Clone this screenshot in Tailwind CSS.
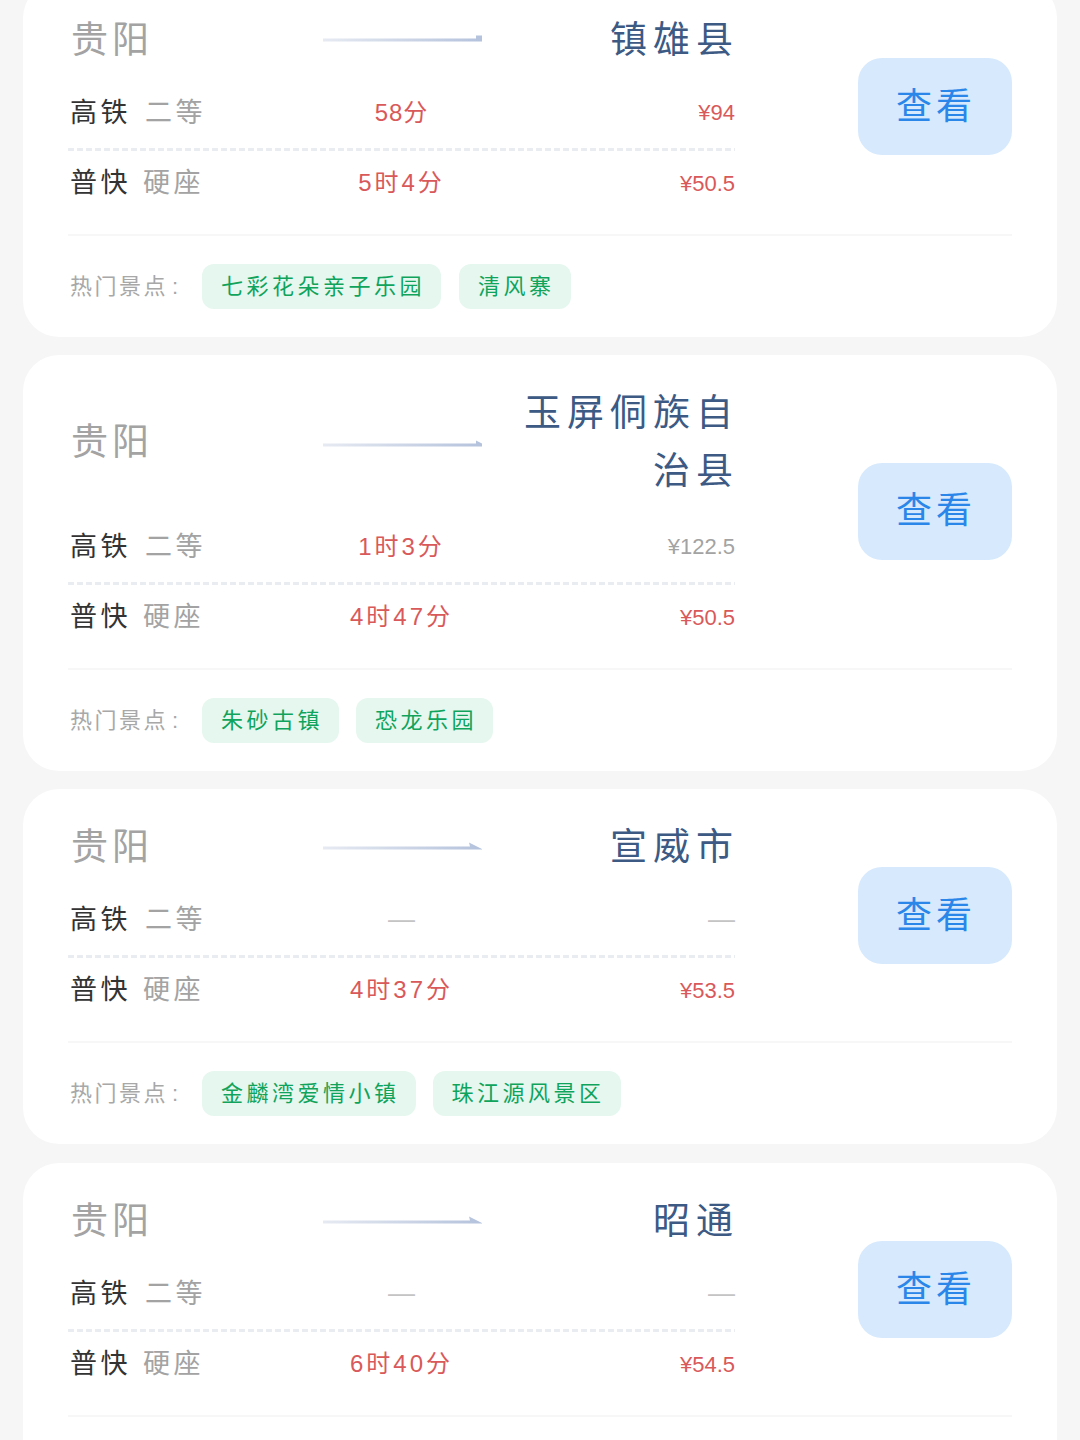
<!DOCTYPE html>
<html lang="zh-CN">
  <head>
    <meta charset="UTF-8" />
    <meta name="viewport" content="width=device-width, initial-scale=1.0" />
    <title>贵阳出发</title>
    <script src="https://cdn.jsdelivr.net/npm/@tailwindcss/browser@4"></script>
  </head>
  <body class="bg-[#f6f6f7] font-['Liberation_Sans','Noto_Sans_CJK_SC',sans-serif]">
    <div class="h-[1440px] overflow-hidden px-[23px]">
      <div class="-mt-[18px] flex flex-col gap-[18px]">

        <!-- 镇雄县 -->
        <div class="rounded-[36px] bg-white px-[45px]">
          <div class="flex items-center border-b-2 border-[#f7f7f8] pt-[30px] pb-[19px]">
            <div class="w-[667px]">
              <div class="grid grid-cols-3 items-center text-[37px] leading-[58px] tracking-[6px]">
                <div class="pl-[3px] tracking-[4px] text-[#a3a3a3]">贵阳</div>
                <svg class="-mt-[2px] ml-[33px]" width="159" height="12" viewBox="0 0 159 12"><defs><linearGradient id="a1"><stop offset="0" stop-color="#e6eaf2" /><stop offset="1" stop-color="#b4c2dc" /></linearGradient></defs><path d="M0 4.500h153V1.500h6v6H0z" fill="url(#a1)" /></svg>
                <div class="-mr-[4px] text-right text-[#3c5a84]">镇雄县</div>
              </div>
              <div class="grid h-[78px] grid-cols-3 items-center pt-[7px] text-[27px]">
                <div class="pl-[2px] pt-[2px] tracking-[3.5px] text-[#333]">高铁<span class="ml-[14px] text-[#a3a3a3]">二等</span></div>
                <div class="text-center text-[24px] tracking-[1px] text-[#d9595a]">58分</div>
                <div class="text-right text-[22px] text-[#d9595a]">¥94</div>
              </div>
              <div class="h-[3px] bg-[repeating-linear-gradient(90deg,#e9ecf1_0_6px,transparent_6px_9px)]"></div>
              <div class="grid h-[64px] grid-cols-3 items-center text-[27px]">
                <div class="pl-[2px] tracking-[3.5px] text-[#333]">普快<span class="ml-[12px] text-[#a3a3a3]">硬座</span></div>
                <div class="text-center text-[24px] tracking-[3px] text-[#d9595a]">5时4分</div>
                <div class="text-right text-[22px] text-[#d9595a]">¥50.5</div>
              </div>
            </div>
            <button class="mb-[14px] ml-auto h-[97px] w-[154px] rounded-[24px] bg-[#d6e9fd] pl-[2px] text-[36px] tracking-[4px] text-[#2a86e8]">查看</button>
          </div>
          <div class="flex h-[101px] items-center">
            <div class="w-[134px] pl-[2px] text-[22px] tracking-[2.5px] text-[#a8a8a8]">热门景点<span class="ml-[4px]">:</span></div>
            <div class="flex gap-[18px]">
              <div class="flex h-[45px] items-center rounded-[12px] bg-[#e5f7ee] pl-[19px] pr-[16px] text-[22px] tracking-[3.5px] text-[#0fa35c]">七彩花朵亲子乐园</div>
              <div class="flex h-[45px] items-center rounded-[12px] bg-[#e5f7ee] pl-[19px] pr-[16px] text-[22px] tracking-[3.5px] text-[#0fa35c]">清风寨</div>
            </div>
          </div>
        </div>

        <!-- 玉屏侗族自治县 -->
        <div class="rounded-[36px] bg-white px-[45px]">
          <div class="flex items-center border-b-2 border-[#f7f7f8] pt-[30px] pb-[19px]">
            <div class="w-[667px]">
              <div class="grid grid-cols-3 items-center pb-[3px] text-[37px] leading-[58px] tracking-[6px]">
                <div class="pl-[3px] tracking-[4px] text-[#a3a3a3]">贵阳</div>
                <svg class="ml-[33px] mt-[4px]" width="159" height="12" viewBox="0 0 159 12"><defs><linearGradient id="a2"><stop offset="0" stop-color="#e6eaf2" /><stop offset="1" stop-color="#b4c2dc" /></linearGradient></defs><path d="M0 4.500h153V1.500l6 3v3H0z" fill="url(#a2)" /></svg>
                <div class="-mr-[4px] text-right text-[#3c5a84]">玉屏侗族自治县</div>
              </div>
              <div class="grid h-[78px] grid-cols-3 items-center pt-[7px] text-[27px]">
                <div class="pl-[2px] pt-[2px] tracking-[3.5px] text-[#333]">高铁<span class="ml-[14px] text-[#a3a3a3]">二等</span></div>
                <div class="text-center text-[24px] tracking-[3px] text-[#d9595a]">1时3分</div>
                <div class="text-right text-[22px] text-[#a3a3a3]">¥122.5</div>
              </div>
              <div class="h-[3px] bg-[repeating-linear-gradient(90deg,#e9ecf1_0_6px,transparent_6px_9px)]"></div>
              <div class="grid h-[64px] grid-cols-3 items-center text-[27px]">
                <div class="pl-[2px] tracking-[3.5px] text-[#333]">普快<span class="ml-[12px] text-[#a3a3a3]">硬座</span></div>
                <div class="text-center text-[24px] tracking-[3px] text-[#d9595a]">4时47分</div>
                <div class="text-right text-[22px] text-[#d9595a]">¥50.5</div>
              </div>
            </div>
            <button class="mb-[12px] ml-auto h-[97px] w-[154px] rounded-[24px] bg-[#d6e9fd] pl-[2px] text-[36px] tracking-[4px] text-[#2a86e8]">查看</button>
          </div>
          <div class="flex h-[101px] items-center">
            <div class="w-[134px] pl-[2px] text-[22px] tracking-[2.5px] text-[#a8a8a8]">热门景点<span class="ml-[4px]">:</span></div>
            <div class="flex gap-[17px]">
              <div class="flex h-[45px] items-center rounded-[12px] bg-[#e5f7ee] pl-[19px] pr-[16px] text-[22px] tracking-[3.5px] text-[#0fa35c]">朱砂古镇</div>
              <div class="flex h-[45px] items-center rounded-[12px] bg-[#e5f7ee] pl-[19px] pr-[16px] text-[22px] tracking-[3.5px] text-[#0fa35c]">恐龙乐园</div>
            </div>
          </div>
        </div>

        <!-- 宣威市 -->
        <div class="rounded-[36px] bg-white px-[45px]">
          <div class="flex items-center border-b-2 border-[#f7f7f8] pt-[30px] pb-[19px]">
            <div class="w-[667px]">
              <div class="grid grid-cols-3 items-center text-[37px] leading-[58px] tracking-[6px]">
                <div class="pl-[3px] tracking-[4px] text-[#a3a3a3]">贵阳</div>
                <svg class="ml-[33px]" width="159" height="12" viewBox="0 0 159 12"><defs><linearGradient id="a3"><stop offset="0" stop-color="#e6eaf2" /><stop offset="1" stop-color="#b4c2dc" /></linearGradient></defs><path d="M0 4.500h147l-1-4 13 6.500v.5H0z" fill="url(#a3)" /></svg>
                <div class="-mr-[4px] text-right text-[#3c5a84]">宣威市</div>
              </div>
              <div class="grid h-[78px] grid-cols-3 items-center pt-[7px] text-[27px]">
                <div class="pl-[2px] pt-[2px] tracking-[3.5px] text-[#333]">高铁<span class="ml-[14px] text-[#a3a3a3]">二等</span></div>
                <div class="text-center text-[#c4c4c4]">—</div>
                <div class="text-right text-[#c4c4c4]">—</div>
              </div>
              <div class="h-[3px] bg-[repeating-linear-gradient(90deg,#e9ecf1_0_6px,transparent_6px_9px)]"></div>
              <div class="grid h-[64px] grid-cols-3 items-center text-[27px]">
                <div class="pl-[2px] tracking-[3.5px] text-[#333]">普快<span class="ml-[12px] text-[#a3a3a3]">硬座</span></div>
                <div class="text-center text-[24px] tracking-[3px] text-[#d9595a]">4时37分</div>
                <div class="text-right text-[22px] text-[#d9595a]">¥53.5</div>
              </div>
            </div>
            <button class="mb-[10px] ml-auto h-[97px] w-[154px] rounded-[24px] bg-[#d6e9fd] pl-[2px] text-[36px] tracking-[4px] text-[#2a86e8]">查看</button>
          </div>
          <div class="flex h-[101px] items-center">
            <div class="w-[134px] pl-[2px] text-[22px] tracking-[2.5px] text-[#a8a8a8]">热门景点<span class="ml-[4px]">:</span></div>
            <div class="flex gap-[17px]">
              <div class="flex h-[45px] items-center rounded-[12px] bg-[#e5f7ee] pl-[19px] pr-[16px] text-[22px] tracking-[3.5px] text-[#0fa35c]">金麟湾爱情小镇</div>
              <div class="flex h-[45px] items-center rounded-[12px] bg-[#e5f7ee] pl-[19px] pr-[16px] text-[22px] tracking-[3.5px] text-[#0fa35c]">珠江源风景区</div>
            </div>
          </div>
        </div>

        <!-- 昭通 -->
        <div class="mt-px rounded-[36px] bg-white px-[45px]">
          <div class="flex items-center border-b-2 border-[#f7f7f8] pt-[30px] pb-[19px]">
            <div class="w-[667px]">
              <div class="grid grid-cols-3 items-center text-[37px] leading-[58px] tracking-[6px]">
                <div class="pl-[3px] tracking-[4px] text-[#a3a3a3]">贵阳</div>
                <svg class="ml-[33px]" width="159" height="12" viewBox="0 0 159 12"><defs><linearGradient id="a4"><stop offset="0" stop-color="#e6eaf2" /><stop offset="1" stop-color="#b4c2dc" /></linearGradient></defs><path d="M0 4.500h147l-1-4 13 6.500v.5H0z" fill="url(#a4)" /></svg>
                <div class="-mr-[4px] text-right text-[#3c5a84]">昭通</div>
              </div>
              <div class="grid h-[78px] grid-cols-3 items-center pt-[7px] text-[27px]">
                <div class="pl-[2px] pt-[2px] tracking-[3.5px] text-[#333]">高铁<span class="ml-[14px] text-[#a3a3a3]">二等</span></div>
                <div class="text-center text-[#c4c4c4]">—</div>
                <div class="text-right text-[#c4c4c4]">—</div>
              </div>
              <div class="h-[3px] bg-[repeating-linear-gradient(90deg,#e9ecf1_0_6px,transparent_6px_9px)]"></div>
              <div class="grid h-[64px] grid-cols-3 items-center text-[27px]">
                <div class="pl-[2px] tracking-[3.5px] text-[#333]">普快<span class="ml-[12px] text-[#a3a3a3]">硬座</span></div>
                <div class="text-center text-[24px] tracking-[3px] text-[#d9595a]">6时40分</div>
                <div class="text-right text-[22px] text-[#d9595a]">¥54.5</div>
              </div>
            </div>
            <button class="mb-[10px] ml-auto h-[97px] w-[154px] rounded-[24px] bg-[#d6e9fd] pl-[2px] text-[36px] tracking-[4px] text-[#2a86e8]">查看</button>
          </div>
          <div class="h-[101px]"></div>
        </div>

      </div>
    </div>
  </body>
</html>
